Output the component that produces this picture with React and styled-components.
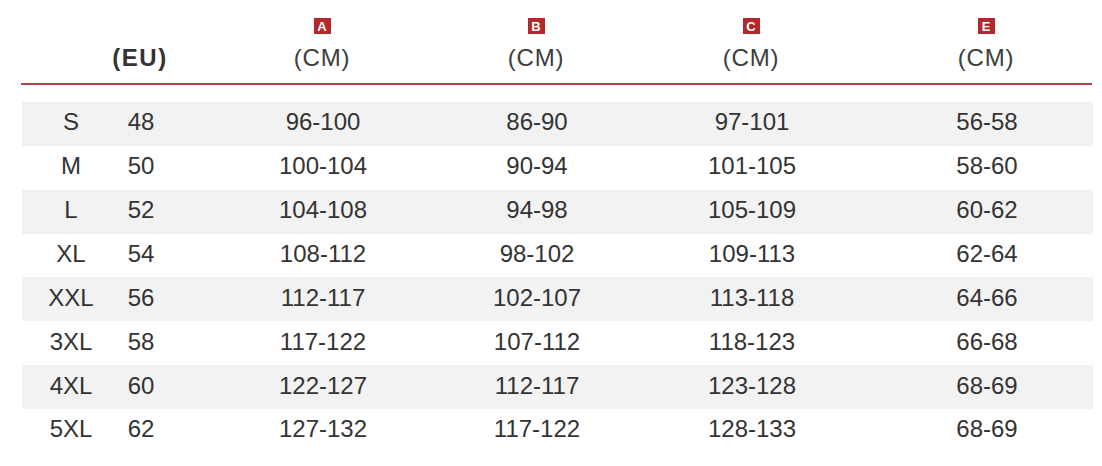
import React from 'react';
import styled, { createGlobalStyle } from 'styled-components';

const GlobalStyle = createGlobalStyle`
  html, body {
    margin: 0;
    padding: 0;
    background: #ffffff;
  }
  body {
    font-family: 'Liberation Sans', Arial, Helvetica, sans-serif;
    color: #333333;
  }
`;

// column tracks, so each column centre lands where the chart has it
const COLUMNS = '98px 42px 322px 106px 324px 146px 1fr';

const headers = [
    {badge: null, label: '(EU)', bold: true},
    {badge: 'A', label: '(CM)'},
    {badge: 'B', label: '(CM)'},
    {badge: 'C', label: '(CM)'},
    {badge: 'E', label: '(CM)'},
];

const rows = [
    ['S', '48', '96-100', '86-90', '97-101', '56-58'],
    ['M', '50', '100-104', '90-94', '101-105', '58-60'],
    ['L', '52', '104-108', '94-98', '105-109', '60-62'],
    ['XL', '54', '108-112', '98-102', '109-113', '62-64'],
    ['XXL', '56', '112-117', '102-107', '113-118', '64-66'],
    ['3XL', '58', '117-122', '107-112', '118-123', '66-68'],
    ['4XL', '60', '122-127', '112-117', '123-128', '68-69'],
    ['5XL', '62', '127-132', '117-122', '128-133', '68-69'],
];

export const SizeChart = () => {
    return (
        <Chart>
            <HeadRow>
                <HeadCell />
                {headers.map((h, i) => (
                    <HeadCell key={i}>
                        {h.badge && <Badge>{h.badge}</Badge>}
                        <HeadLabel bold={h.bold}>{h.label}</HeadLabel>
                    </HeadCell>
                ))}
            </HeadRow>
            <Body>
                {rows.map((r, i) => (
                    <Row key={r[0]} striped={i % 2 === 0}>
                        {r.map((v, j) => (
                            <Cell key={j}>{v}</Cell>
                        ))}
                    </Row>
                ))}
            </Body>
        </Chart>
    );
};

export default function App() {
    return (
        <>
            <GlobalStyle />
            <SizeChart />
        </>
    );
}

const Chart = styled.div`
  width: 1102px;
  height: 466px;
  display: flex;
  flex-direction: column;
  background: #ffffff;
  overflow: hidden;
`;

const HeadRow = styled.div`
  display: grid;
  grid-template-columns: ${COLUMNS};
  margin-left: 21px;
  width: 1071px;
  height: 65px;
  padding-top: 18px;
  border-bottom: 2px solid #ad4345;
`;

const HeadCell = styled.div`
  display: flex;
  flex-direction: column;
  align-items: center;
  justify-content: flex-end;
  padding-bottom: 11px;
  min-width: 0;
`;

const Badge = styled.span`
  display: flex;
  align-items: center;
  justify-content: center;
  width: 17px;
  height: 16px;
  margin-bottom: 10px;
  background: #b3282d;
  color: #ffffff;
  font-size: 13px;
  font-weight: 700;
  line-height: 1;
`;

const HeadLabel = styled.span`
  font-size: 24px;
  line-height: 28px;
  letter-spacing: ${props => props.bold ? '1.5px' : '0.8px'};
  font-weight: ${props => props.bold ? 700 : 400};
  color: ${props => props.bold ? '#333333' : '#3d3d3d'};
  white-space: nowrap;
`;

const Body = styled.div`
  display: flex;
  flex-direction: column;
  margin-top: 17px;
  margin-left: 22px;
  width: 1071px;
`;

const Row = styled.div`
  display: grid;
  grid-template-columns: ${COLUMNS};
  height: 43.86px;
  background: ${props => props.striped ? '#f2f2f2' : '#ffffff'};
`;

const Cell = styled.div`
  display: flex;
  align-items: center;
  justify-content: center;
  padding-bottom: 3px;
  font-size: 24px;
  color: #333333;
  white-space: nowrap;
  min-width: 0;
`;
